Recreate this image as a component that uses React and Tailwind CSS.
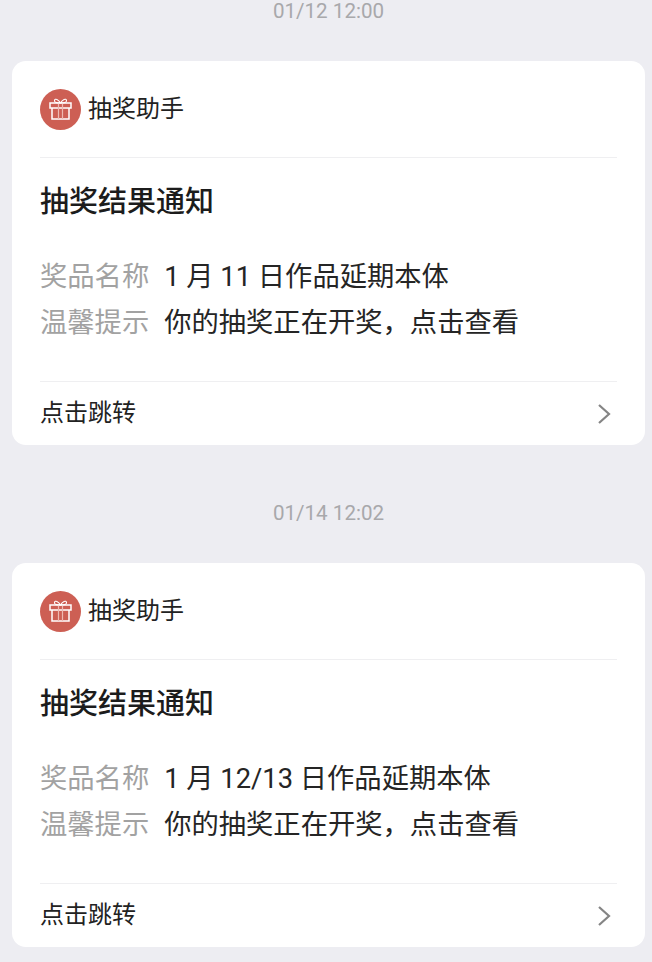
const GiftIcon = () => (
  <svg width="41" height="41" viewBox="0 0 41 41" fill="none">
    <circle cx="20.5" cy="20.5" r="20.5" fill="#cd5f54" />
    <rect x="10" y="14" width="21" height="5" stroke="#fff" strokeWidth="1.5" />
    <path d="M12 19V30H29V19" stroke="#fff" strokeWidth="1.5" />
    <path d="M18.5 14V30M22.5 14V30" stroke="#eeb9b2" strokeWidth="1.2" />
    <path d="M20.5 14C18.5 10.5 15 9 14.5 11.5C14 13.5 17 14 20.5 14C24 14 27 13.5 26.5 11.5C26 9 22.5 10.5 20.5 14Z" stroke="#fff" strokeWidth="1.1" />
  </svg>
);

const Card = ({ time, prize }) => (
  <div>
    <div className="h-[23px] pl-[5px] text-center text-[20.6px] leading-[23px] text-[#a8a8ab]">{time}</div>
    <div className="mx-3 mt-[38px] w-[633px] rounded-[14px] bg-white px-7">
      <div className="flex h-[97px] items-center gap-[7px] border-b border-[#efeff1]">
        <GiftIcon />
        <span className="text-[24px] text-[#222]">抽奖助手</span>
      </div>
      <div className="pt-[26px] text-[29px] leading-[37px] font-medium text-[#1c1c1c]">抽奖结果通知</div>
      <div className="mt-[36px] flex flex-col gap-[6px] pb-[38px] text-[27.3px] leading-[40px]">
        <div className="flex gap-[15px]">
          <span className="text-[#a2a2a2]">奖品名称</span>
          <span className="text-[#252525]">{prize}</span>
        </div>
        <div className="flex gap-[15px]">
          <span className="text-[#a2a2a2]">温馨提示</span>
          <span className="text-[#252525]">你的抽奖正在开奖，点击查看</span>
        </div>
      </div>
      <div className="flex h-[64px] items-center justify-between border-t border-[#efeff1]">
        <span className="pb-[2px] text-[24px] text-[#222]">点击跳转</span>
        <svg width="14" height="22" viewBox="0 0 14 22" fill="none" className="mr-[6px]">
          <path d="M2 2L12 11L2 20" stroke="#858585" strokeWidth="2.2" />
        </svg>
      </div>
    </div>
  </div>
);

export default function App() {
  return (
    <div className="flex h-[962px] w-[652px] flex-col gap-[57px] overflow-hidden bg-[#ededf2] font-['Roboto','Noto_Sans_CJK_SC',sans-serif]">
      <Card time="01/12 12:00" prize="1 月 11 日作品延期本体" />
      <Card time="01/14 12:02" prize="1 月 12/13 日作品延期本体" />
    </div>
  );
}
